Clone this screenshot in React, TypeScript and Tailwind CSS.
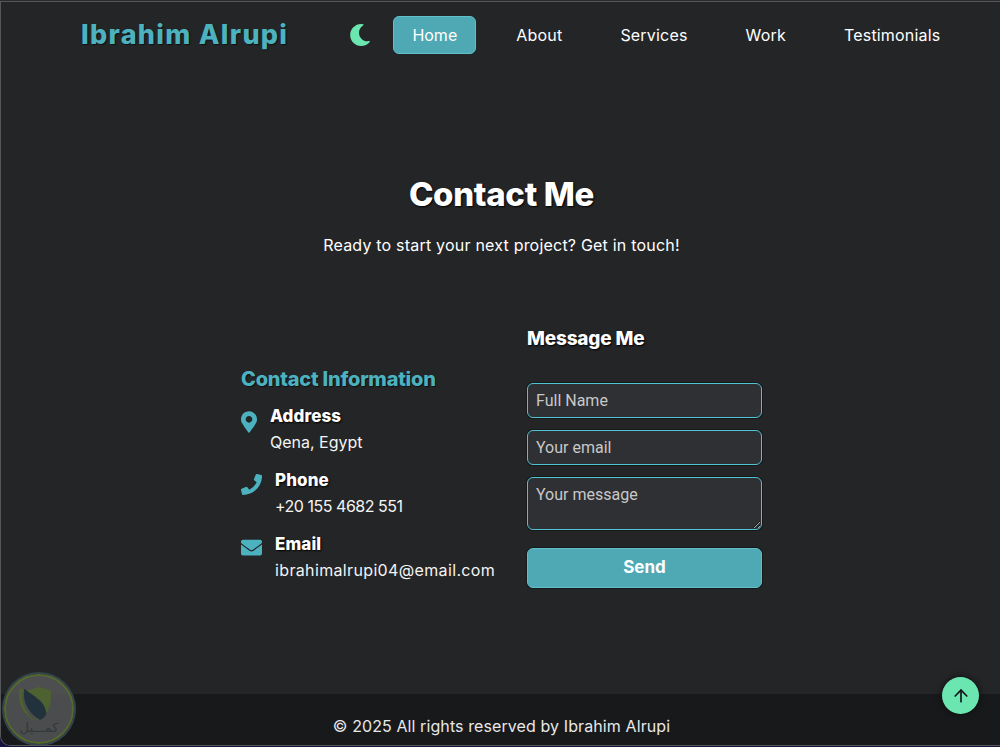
import { ArrowUp } from 'lucide-react'
import { FaEnvelope, FaMapMarkerAlt, FaMoon, FaPhoneAlt } from 'react-icons/fa'

const NAV_LINKS = ['About', 'Services', 'Work', 'Testimonials']

const DISPLAY = "font-['Inter','Open_Sans',sans-serif]"
const FIELD =
  'w-full rounded-[6px] border border-[#50c4d2] bg-[#2f3033] px-[8px] placeholder:text-[#c8c8c8] shadow-[0_0_0_1px_#17181a]'

function InfoRow({
  icon,
  title,
  value,
  gap,
  valueClass,
}: {
  icon: React.ReactNode
  title: string
  value: string
  gap: string
  valueClass: string
}) {
  return (
    <div className={`flex items-start ${gap}`}>
      <div className="shrink-0">{icon}</div>
      <div>
        <h4 className="text-[17px] font-extrabold leading-[24px] text-white tracking-[0.005em] [text-shadow:1px_1px_2px_#000]">{title}</h4>
        <p className={`mt-[2px] text-[16px] leading-[24px] text-[#f4f4f4] ${valueClass}`}>{value}</p>
      </div>
    </div>
  )
}

export default function App() {
  return (
    <div className="h-[747px] w-[1000px] overflow-hidden bg-[linear-gradient(#2a2a2c_0%,#2a2a2c_65%,#14143c_80%,#14143c_100%)] pt-[1px]">
      <div className={`relative flex h-[745px] flex-col overflow-hidden rounded-bl-[10px] border-t border-l border-b border-[#55575a] bg-[#242527] ${DISPLAY}`}>
        <header className="flex h-[66px] shrink-0 items-center pl-[80px]">
          <a className="whitespace-nowrap text-[27px] font-extrabold tracking-[0.048em] text-[#4db2bf] [text-shadow:1px_1px_1px_#111]">Ibrahim Alrupi</a>
          <FaMoon className="ml-[61px] h-[22px] w-[22px] text-[#6ce6b1]" />
          <nav className="ml-[22px] flex items-center text-[16px] text-white">
            <a className="mr-[40px] flex h-[38px] w-[83px] items-center justify-center rounded-[6px] border border-[#5fc0cb] bg-[#4ea9b4]">Home</a>
            <div className="flex items-center gap-[58px]">
              {NAV_LINKS.map((link) => (
                <a key={link} className="whitespace-nowrap tracking-[0.012em]">
                  {link}
                </a>
              ))}
            </div>
          </nav>
        </header>

        <main className="flex flex-1 flex-col items-center pl-[2px] pt-[104px]">
          <h2 className="text-[33px] font-extrabold leading-[44px] text-white tracking-[-0.01em] [text-shadow:1px_1px_2px_#000]">Contact Me</h2>
          <p className="mt-[17px] text-[16px] leading-[24px] tracking-[0.013em] text-white">Ready to start your next project? Get in touch!</p>

          <div className="mt-[68px] flex w-[521px] justify-between">
            <div className="w-[270px] pt-[40px]">
              <h3 className="text-[20px] font-extrabold leading-[28px] text-[#4db2bf] tracking-[-0.012em] [text-shadow:1px_1px_1px_#111]">Contact Information</h3>
              <div className="mt-[11px] flex flex-col gap-[14px]">
                <InfoRow
                  gap="gap-[13px]"
                  title="Address"
                  value="Qena, Egypt"
                  valueClass=""
                  icon={<FaMapMarkerAlt className="mt-[7px] h-[22px] w-[16px] text-[#4db2bf]" />}
                />
                <InfoRow
                  gap="gap-[13px]"
                  title="Phone"
                  value="+20 155 4682 551"
                  valueClass="tracking-[-0.03em]"
                  icon={<FaPhoneAlt className="mt-[6px] h-[21px] w-[21px] -scale-x-100 text-[#4db2bf]" />}
                />
                <InfoRow
                  gap="gap-[13px]"
                  title="Email"
                  value="ibrahimalrupi04@email.com"
                  valueClass="tracking-[0.022em]"
                  icon={<FaEnvelope className="mt-[5px] h-[21px] w-[21px] text-[#4db2bf]" />}
                />
              </div>
            </div>

            <form className="w-[235px]">
              <h3 className="text-[19px] font-extrabold leading-[28px] text-white tracking-[-0.01em] [text-shadow:1px_1px_2px_#000]">Message Me</h3>
              <div className="mt-[30px] flex flex-col gap-[12px] font-['Roboto',sans-serif] text-[16px]">
                <input placeholder="Full Name" className={`h-[35px] ${FIELD}`} />
                <input placeholder="Your email" className={`h-[35px] ${FIELD}`} />
                <textarea placeholder="Your message" className={`block h-[53px] py-[5px] ${FIELD}`} />
              </div>
              <button
                type="button"
                className="mt-[18px] h-[40px] w-full rounded-[6px] border border-[#5fc0cb] bg-[#4ea9b4] text-[17px] font-bold text-white shadow-[0_0_0_1px_#17181a]"
              >
                Send
              </button>
            </form>
          </div>
        </main>

        <footer className="flex h-[51px] shrink-0 items-center justify-center bg-[#18191b] pl-[2px] pt-[12px] text-[16px] tracking-[0.006em] text-[#e8e8e8]">
          © 2025 All rights reserved by Ibrahim Alrupi
        </footer>

        <button className="absolute bottom-[31px] right-[21px] flex h-[37px] w-[37px] items-center justify-center rounded-full bg-[#6ce6b1] text-[#10151a] shadow-[0_0_6px_#0b0b0c]">
          <ArrowUp className="h-[20px] w-[20px]" strokeWidth={2} />
        </button>

        {/* watermark badge */}
        <div className="absolute bottom-[1px] left-[3px] flex h-[70px] w-[70px] flex-col items-center rounded-full border-[2px] border-[#55692f] bg-[#58595b]/80 pt-[10px] shadow-[0_0_0_2px_#36454d]">
          <svg viewBox="0 0 46 38" className="h-[35px] w-[44px]">
            <path fill="#4d6230" d="M10 5l13-4 13 4c1 12-1 24-13 33C11 29 9 17 10 5z" />
            <path fill="#4d6230" d="M2 3c-3 14 3 28 17 35C7 28 3 16 6 3z" />
            <path fill="#22323c" d="M7 3c-2 14 4 26 17 34 4-2 6-4 7-7C30 16 18 12 7 3z" />
          </svg>
          <span className="font-['DejaVu_Sans',sans-serif] text-[13px] leading-[13px] text-[#33393a]">كمـــيل</span>
        </div>
      </div>
    </div>
  )
}
